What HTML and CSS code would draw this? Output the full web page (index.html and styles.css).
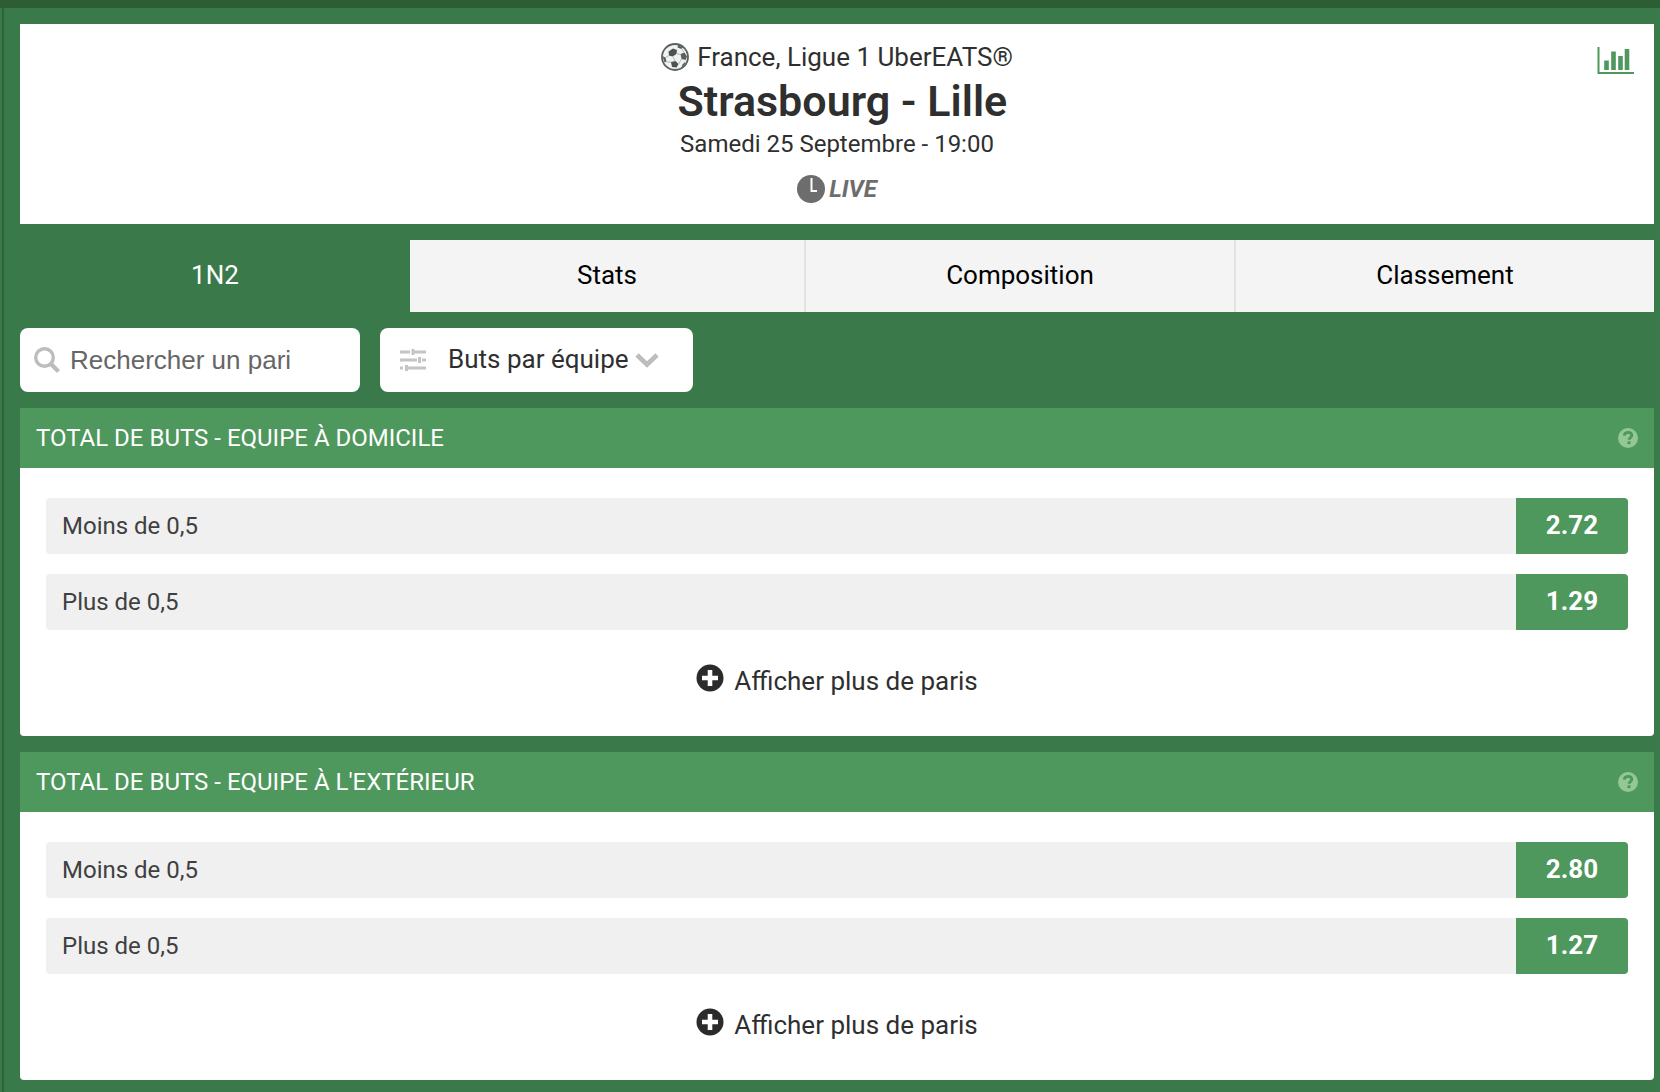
FILE: index.html
```html
<!DOCTYPE html>
<html lang="fr">
<head>
<meta charset="utf-8">
<meta name="viewport" content="width=device-width, initial-scale=1">
<title>Strasbourg - Lille</title>
<link rel="stylesheet" href="styles.css">
</head>
<body>
<svg class="sprite" aria-hidden="true">
  <symbol id="icon-help" viewBox="0 0 20 20">
    <circle cx="10" cy="10" r="10" fill="#93c894"/>
    <path d="M6.3 7.600C6.500 5.400 8 4.300 10.100 4.300c2.200 0 3.700 1.100 3.700 2.900 0 2.300-2.700 2.500-2.700 4.600" fill="none" stroke="#4e975d" stroke-width="2.800"/>
    <rect x="9.500" y="13.300" width="3" height="2.800" fill="#4e975d"/>
  </symbol>
  <symbol id="icon-plus" viewBox="0 0 28 28">
    <circle cx="14" cy="14" r="13.500" fill="#2b2b2b"/>
    <path d="M14 6v16M6 14h16" stroke="#fff" stroke-width="4.600"/>
  </symbol>
</svg>
<div class="page">
  <header class="match">
    <p class="league">
      <svg class="ball" viewBox="0 0 28 28" aria-hidden="true">
        <circle cx="14" cy="14" r="13" fill="#f1f3f3" stroke="#59615f" stroke-width="1.800"/>
        <path d="M7.500 8.500l4.500-3 4 1.500-.5 4-4 2.500-3.500-1z" fill="#4c5452"/>
        <path d="M19.500 11l4-1.500 2.500 4-1.500 3.500-4-1z" fill="#59615f"/>
        <path d="M10 19l4.500-1 3 3-2 3.500-4.500-.5z" fill="#4c5452"/>
        <path d="M1.500 13l3 1.500 1 4-2 1z" fill="#59615f"/>
        <path d="M17 2l5 2.500-1.500 1.500-4-1.500z" fill="#59615f"/>
        <path d="M21.500 21.500l3-3-1 3.500-3 2.500z" fill="#59615f"/>
        <path d="M15.500 10.500l4 1M12 13.500l2 4.500M20.500 16l-3 5M4.500 14.500l3.500-2M5.500 19l4.500 0M20.500 5.500l2.500 4" stroke="#a3aaa8" stroke-width=".8"/>
      </svg>
      <span>France, Ligue 1 UberEATS®</span>
    </p>
    <h1 class="teams">&nbsp;Strasbourg - Lille</h1>
    <p class="date">Samedi 25 Septembre - 19:00</p>
    <p class="live">
      <svg class="clock" viewBox="0 0 28 28" aria-hidden="true">
        <circle cx="14" cy="14" r="14" fill="#6d6d6d"/>
        <path d="M14.500 3v13h5.500" fill="none" stroke="#fff" stroke-width="2"/>
      </svg>
      <span>LIVE</span>
    </p>
    <button class="chart" type="button" aria-label="Statistiques">
      <svg viewBox="0 0 38 28" aria-hidden="true">
        <path d="M1.500 0v26H37" fill="none" stroke="#4e975d" stroke-width="2"/>
        <path d="M9.500 13.500V23M16.500 4.500V23M23.500 9V23M30 2V23" stroke="#4e975d" stroke-width="4.600"/>
      </svg>
    </button>
  </header>

  <nav class="tabs">
    <button class="tab tab-active" type="button">1N2</button>
    <button class="tab" type="button">Stats</button>
    <button class="tab" type="button">Composition</button>
    <button class="tab" type="button">Classement</button>
  </nav>

  <div class="filters">
    <label class="search">
      <svg class="glass" viewBox="0 0 26 26" aria-hidden="true">
        <circle cx="10.500" cy="10.500" r="8.800" fill="none" stroke="#bdbdbd" stroke-width="3.400"/>
        <path d="M17 17l7.500 7.500" stroke="#bdbdbd" stroke-width="4.200"/>
      </svg>
      <input type="text" placeholder="Rechercher un pari" aria-label="Rechercher un pari">
    </label>
    <label class="market">
      <svg class="sliders" viewBox="0 0 26 24" aria-hidden="true">
        <path d="M0 4h10M14 4h12M0 12h17M22 12h4M0 20h3M8 20h18" stroke="#c4c4c4" stroke-width="3"/>
        <path d="M13 1v6M19.500 9v6M6.500 17v6" stroke="#c4c4c4" stroke-width="3"/>
      </svg>
      <select aria-label="Type de pari"><option>Buts par équipe</option></select>
      <svg class="chevron" viewBox="0 0 24 16" aria-hidden="true">
        <path d="M2 3l10 9.500L22 3" fill="none" stroke="#bdbdbd" stroke-width="4.600"/>
      </svg>
    </label>
  </div>

  <section class="bets">
    <div class="bets-head">
      <h2>TOTAL DE BUTS - EQUIPE À DOMICILE</h2>
      <button class="help" type="button" aria-label="Aide"><svg><use href="#icon-help"/></svg></button>
    </div>
    <div class="bets-body">
      <div class="bet"><span>Moins de 0,5</span><button class="odds" type="button">2.72</button></div>
      <div class="bet"><span>Plus de 0,5</span><button class="odds" type="button">1.29</button></div>
      <button class="more" type="button"><svg><use href="#icon-plus"/></svg><span>Afficher plus de paris</span></button>
    </div>
  </section>

  <section class="bets">
    <div class="bets-head">
      <h2>TOTAL DE BUTS - EQUIPE À L'EXTÉRIEUR</h2>
      <button class="help" type="button" aria-label="Aide"><svg><use href="#icon-help"/></svg></button>
    </div>
    <div class="bets-body">
      <div class="bet"><span>Moins de 0,5</span><button class="odds" type="button">2.80</button></div>
      <div class="bet"><span>Plus de 0,5</span><button class="odds" type="button">1.27</button></div>
      <button class="more" type="button"><svg><use href="#icon-plus"/></svg><span>Afficher plus de paris</span></button>
    </div>
  </section>
</div>
</body>
</html>
```
FILE: styles.css
```css
* {
  box-sizing: border-box;
}

body {
  margin: 0;
  background: #3a7a4a;
  border-top: 8px solid #2c5d35;
  font-family: Roboto, "Liberation Sans", sans-serif;
  font-size: 24px;
  color: #2f2f2f;
}

h1, h2, p {
  margin: 0;
  font-weight: 400;
}

button, input, select {
  margin: 0;
  padding: 0;
  border: 0;
  background: none;
  font: inherit;
  color: inherit;
}

button {
  cursor: pointer;
}

svg {
  display: block;
  flex: none;
}

.sprite {
  position: absolute;
  width: 0;
  height: 0;
}

.page {
  display: flex;
  flex-direction: column;
  gap: 16px;
  margin-left: 2px;
  padding: 16px 6px 12px 16px;
  border-left: 2px solid #2c6437;
}

/* Match header */

.match {
  position: relative;
  display: flex;
  flex-direction: column;
  align-items: center;
  padding: 16px 0 20px;
  background: #fff;
}

.league {
  display: flex;
  align-items: center;
  gap: 8px;
  font-size: 26px;
  line-height: 34px;
}

.ball, .clock {
  width: 28px;
  height: 28px;
}

.teams {
  font-size: 43px;
  font-weight: 600;
  line-height: 54px;
}

.date {
  line-height: 32px;
}

.live {
  display: flex;
  align-items: center;
  gap: 4px;
  margin-top: 14px;
  font-weight: 700;
  font-style: italic;
  line-height: 30px;
  color: #6d6d6d;
}

.chart {
  position: absolute;
  top: 23px;
  right: 19px;
}

.chart svg {
  width: 38px;
  height: 28px;
}

/* Tabs */

.tabs {
  display: grid;
  grid-template-columns: 390fr 396fr 430fr 418fr;
}

.tab {
  height: 72px;
  padding-bottom: 2px;
  border-right: 2px solid #e2e4e4;
  background: #f4f4f4;
  font-size: 26px;
  color: #000;
}

.tab:last-child {
  border-right: 0;
}

.tab-active {
  border-right: 0;
  background: none;
  color: #fff;
}

/* Filters */

.filters {
  display: flex;
  gap: 20px;
}

.search, .market {
  display: flex;
  align-items: center;
  height: 64px;
  border-radius: 8px;
  background: #fff;
  font-size: 26px;
}

.search {
  gap: 10px;
  width: 340px;
  padding: 0 14px;
}

.search input {
  flex: 1;
  min-width: 0;
  font-family: "Liberation Sans", Arial, sans-serif;
}

.search input::placeholder {
  color: #666;
  opacity: 1;
}

.glass {
  width: 26px;
  height: 26px;
}

.market {
  padding: 0 34px 0 20px;
}

.market select {
  appearance: none;
  margin: 0 6px 0 22px;
  padding-bottom: 2px;
}

.sliders {
  width: 26px;
  height: 24px;
}

.chevron {
  width: 24px;
  height: 16px;
}

/* Bet groups */

.bets-head {
  display: flex;
  align-items: center;
  justify-content: space-between;
  height: 60px;
  padding: 0 16px;
  background: #4e975d;
  color: #fff;
}

.bets-head h2 {
  font-size: 24px;
}

.help svg {
  width: 20px;
  height: 20px;
}

.bets-body {
  display: flex;
  flex-direction: column;
  gap: 20px;
  padding: 30px 26px 32px;
  border-radius: 0 0 4px 4px;
  background: #fff;
}

.bet {
  display: flex;
  align-items: center;
  justify-content: space-between;
  height: 56px;
  padding-left: 16px;
  border-radius: 4px;
  background: #f0f0f0;
  color: #404040;
}

.odds {
  width: 112px;
  height: 56px;
  padding-bottom: 2px;
  border-radius: 0 4px 4px 0;
  background: #4e975d;
  font-size: 26px;
  font-weight: 700;
  color: #fff;
}

.more {
  display: flex;
  align-items: flex-start;
  align-self: center;
  gap: 10px;
  height: 54px;
  padding-top: 14px;
  font-size: 26px;
  line-height: 34px;
}

.more svg {
  width: 28px;
  height: 28px;
}
```
